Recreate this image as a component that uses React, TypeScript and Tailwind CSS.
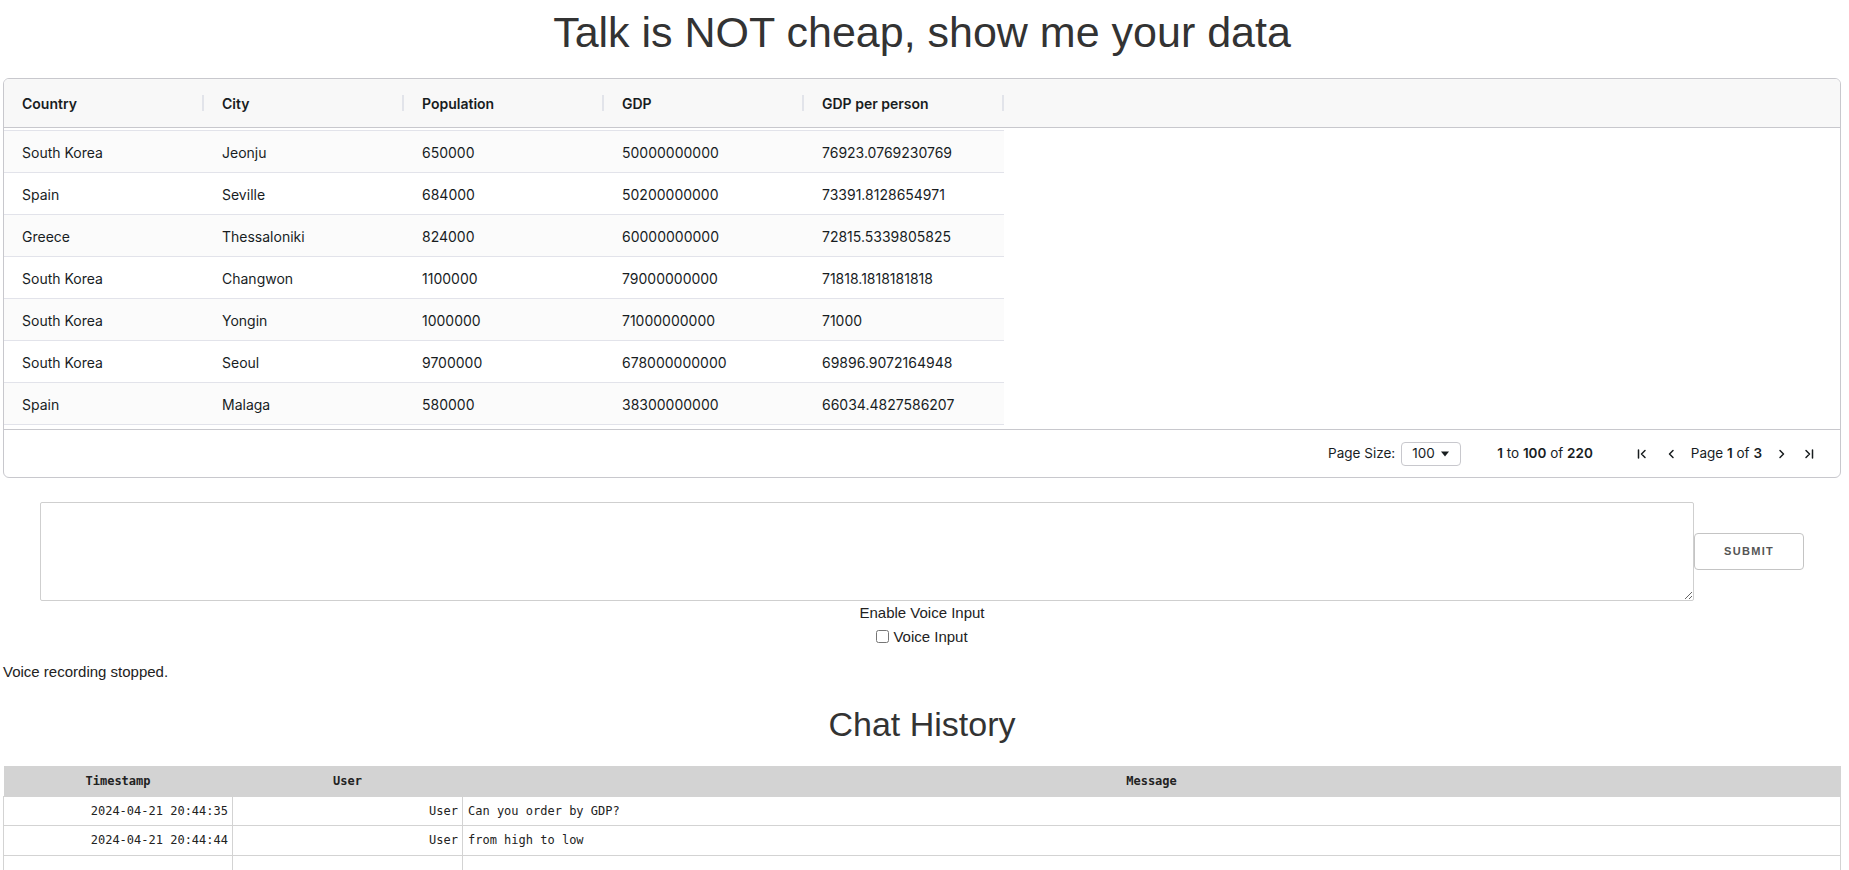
import React from "react";

const cols = ["Country", "City", "Population", "GDP", "GDP per person"];

const rows: string[][] = [
  ["South Korea", "Jeonju", "650000", "50000000000", "76923.0769230769"],
  ["Spain", "Seville", "684000", "50200000000", "73391.8128654971"],
  ["Greece", "Thessaloniki", "824000", "60000000000", "72815.5339805825"],
  ["South Korea", "Changwon", "1100000", "79000000000", "71818.1818181818"],
  ["South Korea", "Yongin", "1000000", "71000000000", "71000"],
  ["South Korea", "Seoul", "9700000", "678000000000", "69896.9072164948"],
  ["Spain", "Malaga", "580000", "38300000000", "66034.4827586207"],
  ["", "", "", "", ""],
];

function Icon({ d }: { d: string }) {
  return (
    <svg width="16" height="16" viewBox="0 0 16 16" fill="none" stroke="#181d1f" strokeWidth="1.5" strokeLinecap="round" strokeLinejoin="round">
      <path d={d} />
    </svg>
  );
}

function Grid() {
  return (
    <div className="h-[400px] rounded-[6px] border border-[#c8c8cd] flex flex-col overflow-hidden font-['Inter',sans-serif] text-[14px] text-[#181d1f]">
      <div className="h-[49px] shrink-0 bg-[#f8f8f8] border-b border-[#c8c8cd] flex">
        {cols.map((c) => (
          <div key={c} className="relative w-[200px] h-full flex items-center pl-[18px] font-semibold">
            {c}
            <span className="absolute right-0 top-[16px] h-[16px] w-[2px] bg-[#e2e4ea]" />
          </div>
        ))}
      </div>
      <div className="h-[301px] shrink-0 overflow-hidden">
        <div className="w-[1000px] pt-[2px]">
          <div className="h-[1px] bg-[#e2e3ea]" />
          {rows.map((r, i) => (
            <div key={i} className={`h-[42px] border-b border-[#e2e3ea] flex ${i % 2 === 0 ? "bg-[#fbfbfb]" : "bg-white"}`}>
              {r.map((v, j) => (
                <div key={j} className="w-[200px] pl-[18px] pt-[2px] flex items-center">
                  {v}
                </div>
              ))}
            </div>
          ))}
        </div>
      </div>
      <div className="h-[48px] shrink-0 border-t border-[#c8c8cd] flex items-center justify-end pr-[23px] text-[13.5px]">
        <span>Page Size:</span>
        <div className="ml-[6px] w-[60px] h-[24px] border border-[#c8c8cd] rounded-[4px] flex items-center pl-[10px] pr-[10px] justify-between">
          <span>100</span>
          <svg width="10" height="8" viewBox="0 0 10 8"><path d="M1 1.5h8L5 6.5z" fill="#181d1f" /></svg>
        </div>
        <span className="ml-[36px]">
          <b className="font-semibold">1</b> to <b className="font-semibold">100</b> of <b className="font-semibold">220</b>
        </span>
        <span className="ml-[41px]"><Icon d="M4.5 4v8M11 4.5L7.5 8 11 11.5" /></span>
        <span className="ml-[13px]"><Icon d="M10 4.5L6.5 8 10 11.5" /></span>
        <span className="ml-[12px]">
          Page <b className="font-semibold">1</b> of <b className="font-semibold">3</b>
        </span>
        <span className="ml-[12px]"><Icon d="M6 4.5L9.5 8 6 11.5" /></span>
        <span className="ml-[11px]"><Icon d="M5 4.5L8.5 8 5 11.5M11.5 4v8" /></span>
      </div>
    </div>
  );
}

const chat = [
  ["2024-04-21 20:44:35", "User", "Can you order by GDP?"],
  ["2024-04-21 20:44:44", "User", "from high to low"],
  ["", "", ""],
];

export default function App() {
  return (
    <div className="h-[870px] overflow-hidden bg-white pl-[3px] pr-[8px] pt-[7px] font-['Liberation_Sans',Arial,sans-serif] text-[#222]">
      <h1 className="mb-[21px] text-center text-[43px] leading-[50px] font-normal text-[#333]">
        Talk is NOT cheap, show me your data
      </h1>
      <Grid />
      <div className="mt-[24px] flex items-center justify-center">
        <textarea className="w-[90%] h-[99px] border border-[#cfcfcf] rounded-[2px] resize-y block" />
        <button className="w-[110px] h-[37px] border border-[#c4c4c4] rounded-[4px] bg-white text-[11px] font-bold tracking-[0.12em] text-[#555]">
          SUBMIT
        </button>
      </div>
      <div className="mt-[3px] text-center text-[15px] leading-[17px] text-[#222]">Enable Voice Input</div>
      <div className="mt-[7px] flex items-center justify-center text-[15px] leading-[17px] text-[#222]">
        <input type="checkbox" className="w-[13px] h-[13px] m-0 mr-[4px]" />
        <span>Voice Input</span>
      </div>
      <div className="mt-[18px] text-[15px] leading-[17px] text-[#222]">Voice recording stopped.</div>
      <h2 className="mt-[24px] mb-[22px] text-center text-[34px] leading-[40px] font-normal text-[#333]">Chat History</h2>
      <table className="w-full border-collapse font-['DejaVu_Sans_Mono',monospace] text-[12px] text-[#222]">
        <thead>
          <tr className="h-[30px] bg-[#d3d3d3]">
            <th className="w-[229px] font-bold text-center">Timestamp</th>
            <th className="w-[230px] font-bold text-center">User</th>
            <th className="font-bold text-center">Message</th>
          </tr>
        </thead>
        <tbody>
          {chat.map((c, i) => (
            <tr key={i} className="h-[29.5px]">
              <td className="border border-[#d3d3d3] text-right pr-[4px]">{c[0]}</td>
              <td className="border border-[#d3d3d3] text-right pr-[4px]">{c[1]}</td>
              <td className="border border-[#d3d3d3] text-left pl-[5px]">{c[2]}</td>
            </tr>
          ))}
        </tbody>
      </table>
    </div>
  );
}
